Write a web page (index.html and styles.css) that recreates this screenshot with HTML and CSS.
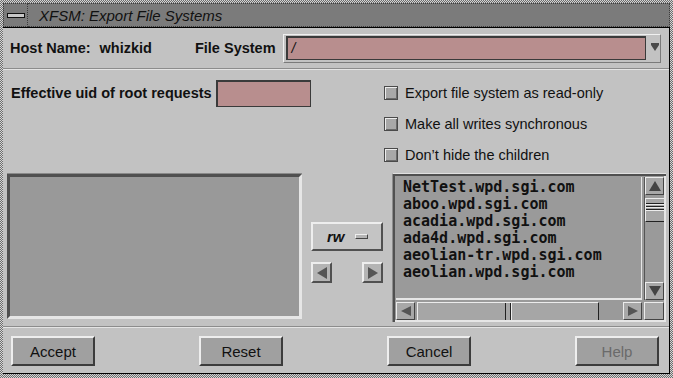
FILE: index.html
```html
<!DOCTYPE html>
<html lang="en">
<head>
    <meta charset="UTF-8">
    <title>XFSM: Export File Systems</title>
    <link rel="stylesheet" href="styles.css">
</head>
<body>
    <div class="window">
        <div class="titlebar">
            <div class="menu-btn"><span class="dash"></span></div>
            <div class="title">XFSM: Export File Systems</div>
        </div>
        <div class="client">
            <div class="host-row">
                <span class="label">Host Name:</span>
                <span class="label host">whizkid</span>
                <span class="label fs-label">File System</span>
                <div class="combo">
                    <div class="field combo-field">/</div>
                    <span class="combo-arrow"></span>
                </div>
            </div>

            <div class="options">
                <div class="uid-row">
                    <span class="label">Effective uid of root requests</span>
                    <div class="field uid-field"></div>
                </div>
                <div class="checks">
                    <div class="check"><span class="box"></span>Export file system as read&#8209;only</div>
                    <div class="check"><span class="box"></span>Make all writes synchronous</div>
                    <div class="check"><span class="box"></span>Don’t hide the children</div>
                </div>
            </div>

            <div class="lists">
                <div class="list-left"></div>
                <div class="mover">
                    <div class="option-btn"><span class="rw">rw</span><span class="indicator"></span></div>
                    <div class="arrows">
                        <div class="arrow-btn"><span class="tri tri-left"></span></div>
                        <div class="arrow-btn"><span class="tri tri-right"></span></div>
                    </div>
                </div>
                <div class="list-right">
                    <div class="hosts">
                        <div>NetTest.wpd.sgi.com</div>
                        <div>aboo.wpd.sgi.com</div>
                        <div>acadia.wpd.sgi.com</div>
                        <div>ada4d.wpd.sgi.com</div>
                        <div>aeolian-tr.wpd.sgi.com</div>
                        <div>aeolian.wpd.sgi.com</div>
                    </div>
                    <div class="vscroll">
                        <div class="sb-btn"><span class="tri tri-up"></span></div>
                        <div class="vthumb"><span></span><span></span><span></span></div>
                        <div class="trough"></div>
                        <div class="sb-btn"><span class="tri tri-down"></span></div>
                    </div>
                    <div class="hscroll">
                        <div class="sb-btn"><span class="tri tri-left small"></span></div>
                        <div class="hthumb"><span class="grip"></span></div>
                        <div class="trough"></div>
                        <div class="sb-btn"><span class="tri tri-right small"></span></div>
                    </div>
                    <div class="corner"></div>
                </div>
            </div>

            <div class="actions">
                <div class="button">Accept</div>
                <div class="button">Reset</div>
                <div class="button">Cancel</div>
                <div class="button disabled">Help</div>
            </div>
        </div>
    </div>
</body>
</html>
```

FILE: styles.css
```css
* {
    box-sizing: border-box;
}
body {
    margin: 0;
    font-family: 'Liberation Sans', Arial, sans-serif;
    color: #111;
    background: #c2c2c2;
}
.window {
    width: 673px;
    height: 378px;
    padding: 3px 3px 4px 3px;
    background: repeating-conic-gradient(#6e6e6e 0 25%, #d6d6d6 0 50%) 0 0 / 2px 2px;
    display: flex;
    flex-direction: column;
}
.titlebar {
    height: 25px;
    display: flex;
    background: #7b7b7b;
    border-bottom: 1px solid #000;
}
.menu-btn {
    width: 25px;
    display: flex;
    align-items: center;
    justify-content: center;
    border: 1px dotted #3c3c3c;
}
.dash {
    width: 18px;
    height: 5px;
    background: #c8c8c8;
    border: 1px solid #111;
}
.title {
    flex: 1;
    padding-left: 11px;
    font-style: italic;
    font-size: 15px;
    line-height: 23px;
    border: 1px dotted #3c3c3c;
    border-left: none;
}
.client {
    flex: 1;
    background: #c2c2c2;
    border-right: 1px solid #000;
    border-bottom: 1px solid #000;
    display: flex;
    flex-direction: column;
}
.label {
    font-weight: bold;
    font-size: 14.5px;
}

/* host name row */
.host-row {
    height: 41px;
    display: flex;
    align-items: center;
    padding-left: 7px;
    border-bottom: 1px solid #8c8c8c;
    box-shadow: 0 1px 0 #e4e4e4;
}
.host {
    margin-left: 9px;
}
.fs-label {
    margin-left: 43px;
}
.combo {
    margin-left: 7px;
    width: 378px;
    height: 29px;
    display: flex;
    align-items: center;
    padding-left: 2px;
    border-top: 1px solid #f0f0f0;
    border-left: 1px solid #f0f0f0;
    border-right: 1px solid #7a7a7a;
    border-bottom: 1px solid #7a7a7a;
}
.field {
    background: #b88e8e;
    border-top: 2px solid #3a3a3a;
    border-left: 2px solid #3a3a3a;
    border-right: 1px solid #3a3a3a;
    border-bottom: 1px solid #3a3a3a;
}
.combo-field {
    width: 360px;
    height: 24px;
    font-size: 14px;
    line-height: 20px;
    padding-left: 4px;
    font-style: italic;
}
.combo-arrow {
    margin-left: 5px;
    width: 0;
    height: 0;
    border-left: 4px solid transparent;
    border-right: 4px solid transparent;
    border-top: 6px solid #4a4a4a;
    box-shadow: 0 -2px 0 #4a4a4a;
}

/* options */
.options {
    height: 104px;
    display: flex;
}
.uid-row {
    width: 381px;
    padding: 11px 0 0 8px;
    display: flex;
    align-items: flex-start;
}
.uid-row .label {
    line-height: 27px;
}
.uid-field {
    margin-left: 4px;
    width: 95px;
    height: 27px;
}
.checks {
    padding-top: 8px;
}
.check {
    height: 31px;
    display: flex;
    align-items: center;
    font-size: 14.5px;
}
.box {
    width: 14px;
    height: 14px;
    margin-right: 7px;
    background: #a8a8a8;
    border: 1px solid #4a4a4a;
    box-shadow: inset 1px 1px 0 #ececec, inset -1px -1px 0 #6a6a6a;
}

/* lists */
.lists {
    height: 149px;
    display: flex;
    padding-left: 4px;
}
.list-left {
    margin-top: 1px;
    width: 295px;
    height: 145px;
    background: #999;
    border-top: 3px solid #505050;
    border-left: 3px solid #505050;
    border-right: 3px solid #e6e6e6;
    border-bottom: 3px solid #e6e6e6;
    box-shadow: 0 -1px 0 #8a8a8a;
}
.mover {
    margin-left: 9px;
    width: 72px;
    padding-top: 49px;
}
.option-btn {
    height: 29px;
    display: flex;
    align-items: center;
    padding-left: 14px;
    background: #c4c4c4;
    border-top: 2px solid #eeeeee;
    border-left: 2px solid #eeeeee;
    border-right: 2px solid #505050;
    border-bottom: 2px solid #505050;
}
.rw {
    font-weight: bold;
    font-style: italic;
    font-size: 15px;
    width: 28px;
}
.indicator {
    width: 13px;
    height: 5px;
    background: #b4b4b4;
    border-top: 1px solid #eee;
    border-left: 1px solid #eee;
    border-right: 1px solid #444;
    border-bottom: 1px solid #444;
}
.arrows {
    margin-top: 11px;
    display: flex;
    justify-content: space-between;
}
.arrow-btn {
    width: 21px;
    height: 21px;
    display: flex;
    align-items: center;
    justify-content: center;
    background: #b4b4b4;
    border-top: 2px solid #eeeeee;
    border-left: 2px solid #eeeeee;
    border-right: 2px solid #505050;
    border-bottom: 2px solid #505050;
}
.tri {
    width: 0;
    height: 0;
}
.tri-left {
    border-top: 6px solid transparent;
    border-bottom: 6px solid transparent;
    border-right: 10px solid #555;
}
.tri-right {
    border-top: 6px solid transparent;
    border-bottom: 6px solid transparent;
    border-left: 10px solid #555;
}
.tri-up {
    border-left: 6px solid transparent;
    border-right: 6px solid transparent;
    border-bottom: 10px solid #444;
}
.tri-down {
    border-left: 6px solid transparent;
    border-right: 6px solid transparent;
    border-top: 10px solid #444;
}
.tri.small {
    border-top-width: 5px;
    border-bottom-width: 5px;
}
.list-right {
    margin-left: 9px;
    width: 274px;
    height: 149px;
    display: grid;
    grid-template-columns: 1fr 20px;
    grid-template-rows: 1fr 18px;
    gap: 2px;
    padding: 3px 2px 2px 3px;
    background: #9a9a9a;
    border-top: 1px solid #e0e0e0;
    border-left: 1px solid #8c8c8c;
    box-shadow: inset 2px 2px 0 #505050, inset -2px -2px 0 #e6e6e6;
}
.hosts {
    background: #9a9a9a;
    padding: 2px 0 0 7px;
    font-family: 'DejaVu Sans Mono', monospace;
    font-weight: bold;
    font-size: 15px;
    line-height: 17px;
    border-right: 1px solid #e6e6e6;
    border-bottom: 2px solid #e6e6e6;
}
.vscroll {
    display: flex;
    flex-direction: column;
    background: #9a9a9a;
    border-left: 1px solid #555;
}
.hscroll {
    display: flex;
    background: #9a9a9a;
}
.sb-btn {
    flex: none;
    width: 19px;
    height: 18px;
    display: flex;
    align-items: center;
    justify-content: center;
    background: #a8a8a8;
    border-top: 1px solid #ececec;
    border-left: 1px solid #ececec;
    border-right: 1px solid #444;
    border-bottom: 1px solid #444;
}
.vscroll .sb-btn {
    width: 100%;
}
.vthumb {
    margin-top: 3px;
    height: 24px;
    background: #a6a6a6;
    border-top: 1px solid #ececec;
    border-left: 1px solid #ececec;
    border-bottom: 1px solid #222;
    display: flex;
    flex-direction: column;
    gap: 2px;
    padding-top: 4px;
}
.vthumb span {
    height: 1px;
    background: #222;
    box-shadow: 0 1px 0 #ececec;
}
.trough {
    flex: 1;
}
.hthumb {
    margin-left: 2px;
    width: 182px;
    height: 18px;
    background: #a6a6a6;
    border-top: 1px solid #ececec;
    border-left: 1px solid #ececec;
    border-right: 1px solid #222;
    display: flex;
    justify-content: center;
}
.grip {
    width: 6px;
    border-left: 1px solid #222;
    border-right: 1px solid #222;
    box-shadow: 1px 0 0 #ececec;
}
.corner {
    background: #a8a8a8;
    border-top: 1px solid #ececec;
    border-left: 1px solid #ececec;
    border-right: 1px solid #444;
    border-bottom: 1px solid #444;
}

/* buttons */
.actions {
    margin-top: 4px;
    flex: 1;
    display: flex;
    align-items: center;
    gap: 104px;
    padding: 2px 0 0 8px;
    border-top: 1px solid #8c8c8c;
    box-shadow: inset 0 1px 0 #e4e4e4;
}
.button {
    width: 84px;
    height: 30px;
    display: flex;
    align-items: center;
    justify-content: center;
    font-size: 15px;
    background: #a0a0a0;
    border-top: 2px solid #eeeeee;
    border-left: 2px solid #eeeeee;
    border-right: 2px solid #3c3c3c;
    border-bottom: 2px solid #3c3c3c;
}
.button.disabled {
    color: #6a6a6a;
}
```
